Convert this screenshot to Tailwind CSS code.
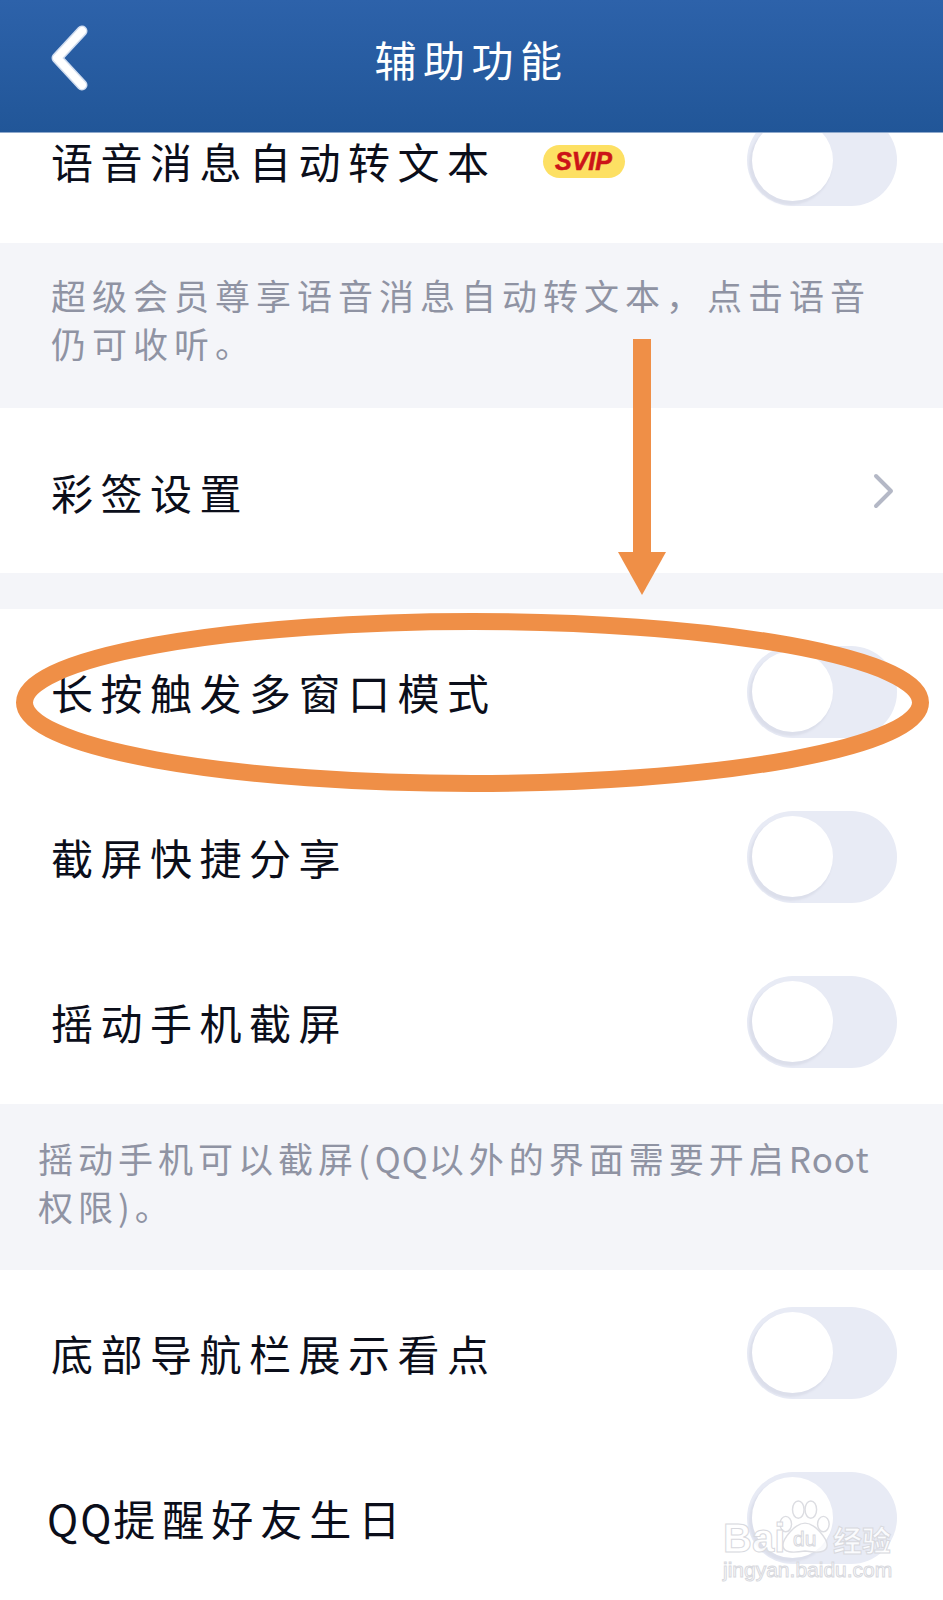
<!DOCTYPE html>
<html lang="zh-CN">
<head>
  <meta charset="UTF-8">
  <title>辅助功能</title>
  <script src="https://cdn.jsdelivr.net/npm/@tailwindcss/browser@4"></script>
</head>
<body class="bg-white [font-family:'Noto_Sans_CJK_SC','Liberation_Sans',sans-serif]">
  <div class="relative w-[943px] h-[1600px] overflow-hidden bg-white">

    <!-- header -->
    <header class="relative z-10 h-[133px] flex items-center justify-center bg-gradient-to-b from-[#2d62aa] to-[#215698] border-b border-[#8fa9cc]">
      <svg class="absolute left-[47px] top-[24px]" width="44" height="68" viewBox="0 0 44 68" fill="none">
        <path d="M35 7 L10 34 L35 61" stroke="#cfdcef" stroke-width="11" stroke-linecap="round" stroke-linejoin="round"/>
        <path d="M35 7 L10 34 L35 61" stroke="#ffffff" stroke-width="8" stroke-linecap="round" stroke-linejoin="round"/>
      </svg>
      <h1 class="text-[42px] leading-none tracking-[6.5px] text-white mt-[-14px]">辅助功能</h1>
    </header>

    <!-- voice to text, scrolled under the header -->
    <div class="h-[110px] flex items-start justify-between pl-[51px] pr-[46px]">
      <div class="flex items-center h-[56px]">
        <span class="text-[42px] leading-none tracking-[7.5px] text-[#0b0e1a]">语音消息自动转文本</span>
        <span class="ml-[46px] w-[82px] h-[33px] rounded-full bg-[#fde063] flex items-center justify-center text-[25px] font-bold italic leading-none text-[#cc1418] [-webkit-text-stroke:0.6px_#cc1418] [font-family:'Liberation_Sans',sans-serif]">SVIP</span>
      </div>
      <div class="mt-[-19px] w-[150px] h-[92px] rounded-full bg-[#e8ebf5] flex items-center pl-[5px]">
        <div class="w-[81px] h-[81px] rounded-full bg-white shadow-[-2px_3px_2px_1px_#dcdfeb]"></div>
      </div>
    </div>

    <div class="h-[165px] bg-[#f4f5f9] pl-[51px] pt-[28px] text-[35px] leading-[48px] tracking-[6px] text-[#8f93a3]">超级会员尊享语音消息自动转文本，点击语音<br>仍可收听。</div>

    <div class="h-[165px] flex items-center justify-between pl-[51px] pr-[48px]">
      <span class="text-[42px] leading-none tracking-[7.5px] text-[#0b0e1a] mt-[3px]">彩签设置</span>
      <svg width="22" height="36" viewBox="0 0 22 36" fill="none">
        <path d="M3 3 L18 18 L3 33" stroke="#b4b8c6" stroke-width="4" stroke-linecap="round" stroke-linejoin="round"/>
      </svg>
    </div>

    <div class="h-[36px] bg-[#f4f5f9]"></div>

    <div class="h-[165px] flex items-center justify-between pl-[51px] pr-[46px]">
      <span class="text-[42px] leading-none tracking-[7.5px] text-[#0b0e1a]">长按触发多窗口模式</span>
      <div class="w-[150px] h-[92px] rounded-full bg-[#e8ebf5] flex items-center pl-[5px]">
        <div class="w-[81px] h-[81px] rounded-full bg-white shadow-[-2px_3px_2px_1px_#dcdfeb]"></div>
      </div>
    </div>

    <div class="h-[165px] flex items-center justify-between pl-[51px] pr-[46px]">
      <span class="text-[42px] leading-none tracking-[7.5px] text-[#0b0e1a]">截屏快捷分享</span>
      <div class="w-[150px] h-[92px] rounded-full bg-[#e8ebf5] flex items-center pl-[5px]">
        <div class="w-[81px] h-[81px] rounded-full bg-white shadow-[-2px_3px_2px_1px_#dcdfeb]"></div>
      </div>
    </div>

    <div class="h-[165px] flex items-center justify-between pl-[51px] pr-[46px]">
      <span class="text-[42px] leading-none tracking-[7.5px] text-[#0b0e1a]">摇动手机截屏</span>
      <div class="w-[150px] h-[92px] rounded-full bg-[#e8ebf5] flex items-center pl-[5px]">
        <div class="w-[81px] h-[81px] rounded-full bg-white shadow-[-2px_3px_2px_1px_#dcdfeb]"></div>
      </div>
    </div>

    <div class="h-[166px] bg-[#f4f5f9] pl-[38px] pt-[30px] text-[35px] leading-[48px] tracking-[5px] text-[#8f93a3] whitespace-nowrap">摇动手机可以截屏(<span class="tracking-[1px]">QQ</span>以外的界面需要开启<span class="tracking-[1px]">Root</span><br>权限)。</div>

    <div class="h-[165px] flex items-center justify-between pl-[51px] pr-[46px]">
      <span class="text-[42px] leading-none tracking-[7.5px] text-[#0b0e1a]">底部导航栏展示看点</span>
      <div class="w-[150px] h-[92px] rounded-full bg-[#e8ebf5] flex items-center pl-[5px]">
        <div class="w-[81px] h-[81px] rounded-full bg-white shadow-[-2px_3px_2px_1px_#dcdfeb]"></div>
      </div>
    </div>

    <div class="h-[165px] flex items-center justify-between pl-[47px] pr-[46px]">
      <span class="text-[42px] leading-none tracking-[7px] text-[#0b0e1a]"><span class="tracking-[2px]">QQ</span>提醒好友生日</span>
      <div class="w-[150px] h-[92px] rounded-full bg-[#e8ebf5] flex items-center pl-[5px]">
        <div class="w-[81px] h-[81px] rounded-full bg-white shadow-[-2px_3px_2px_1px_#dcdfeb]"></div>
      </div>
    </div>

    <!-- annotation drawn on top of the screenshot -->
    <svg class="absolute left-0 top-0 z-20 pointer-events-none" width="943" height="1600" viewBox="0 0 943 1600" fill="none">
      <rect x="633" y="339" width="18" height="214" fill="#ef8f47"/>
      <path d="M618 552 H666 L642 595 Z" fill="#ef8f47"/>
      <ellipse cx="472.5" cy="702.5" rx="448" ry="81" stroke="#ef8f47" stroke-width="17"/>
    </svg>

    <!-- baidu watermark -->
    <div class="absolute z-20 left-[723px] top-[1497px] w-[175px] h-[85px] pointer-events-none">
      <svg class="absolute left-[56px] top-0" width="54" height="58" viewBox="0 0 56 60" fill="#ffffff" fill-opacity="0.75" stroke="#dcdde2" stroke-width="1.5">
        <ellipse cx="20" cy="13" rx="6" ry="9"/>
        <ellipse cx="33" cy="13" rx="6" ry="9"/>
        <ellipse cx="7" cy="28" rx="6" ry="8"/>
        <ellipse cx="46" cy="28" rx="6" ry="8"/>
        <path d="M27 27 C38 27 50 44 50 50 C50 58 40 58 27 56 C14 58 4 58 4 50 C4 44 16 27 27 27 Z"/>
      </svg>
      <span class="absolute left-0 top-[22px] text-[40px] leading-[38px] font-bold text-white/80 [-webkit-text-stroke:1px_#d8d9de] [font-family:'Liberation_Sans',sans-serif]">Bai</span>
      <span class="absolute left-[70px] top-[30px] text-[21px] leading-[24px] text-white [-webkit-text-stroke:1px_#d8d9de] [font-family:'Liberation_Sans',sans-serif]">du</span>
      <span class="absolute left-[110px] top-[24px] text-[29px] leading-[36px] font-bold text-white/80 [-webkit-text-stroke:1px_#d8d9de]">经验</span>
      <span class="absolute left-0 top-[61px] text-[21px] leading-[24px] text-white/80 [-webkit-text-stroke:1px_#d8d9de] [font-family:'Liberation_Sans',sans-serif]">jingyan.baidu.com</span>
    </div>
  </div>
</body>
</html>
